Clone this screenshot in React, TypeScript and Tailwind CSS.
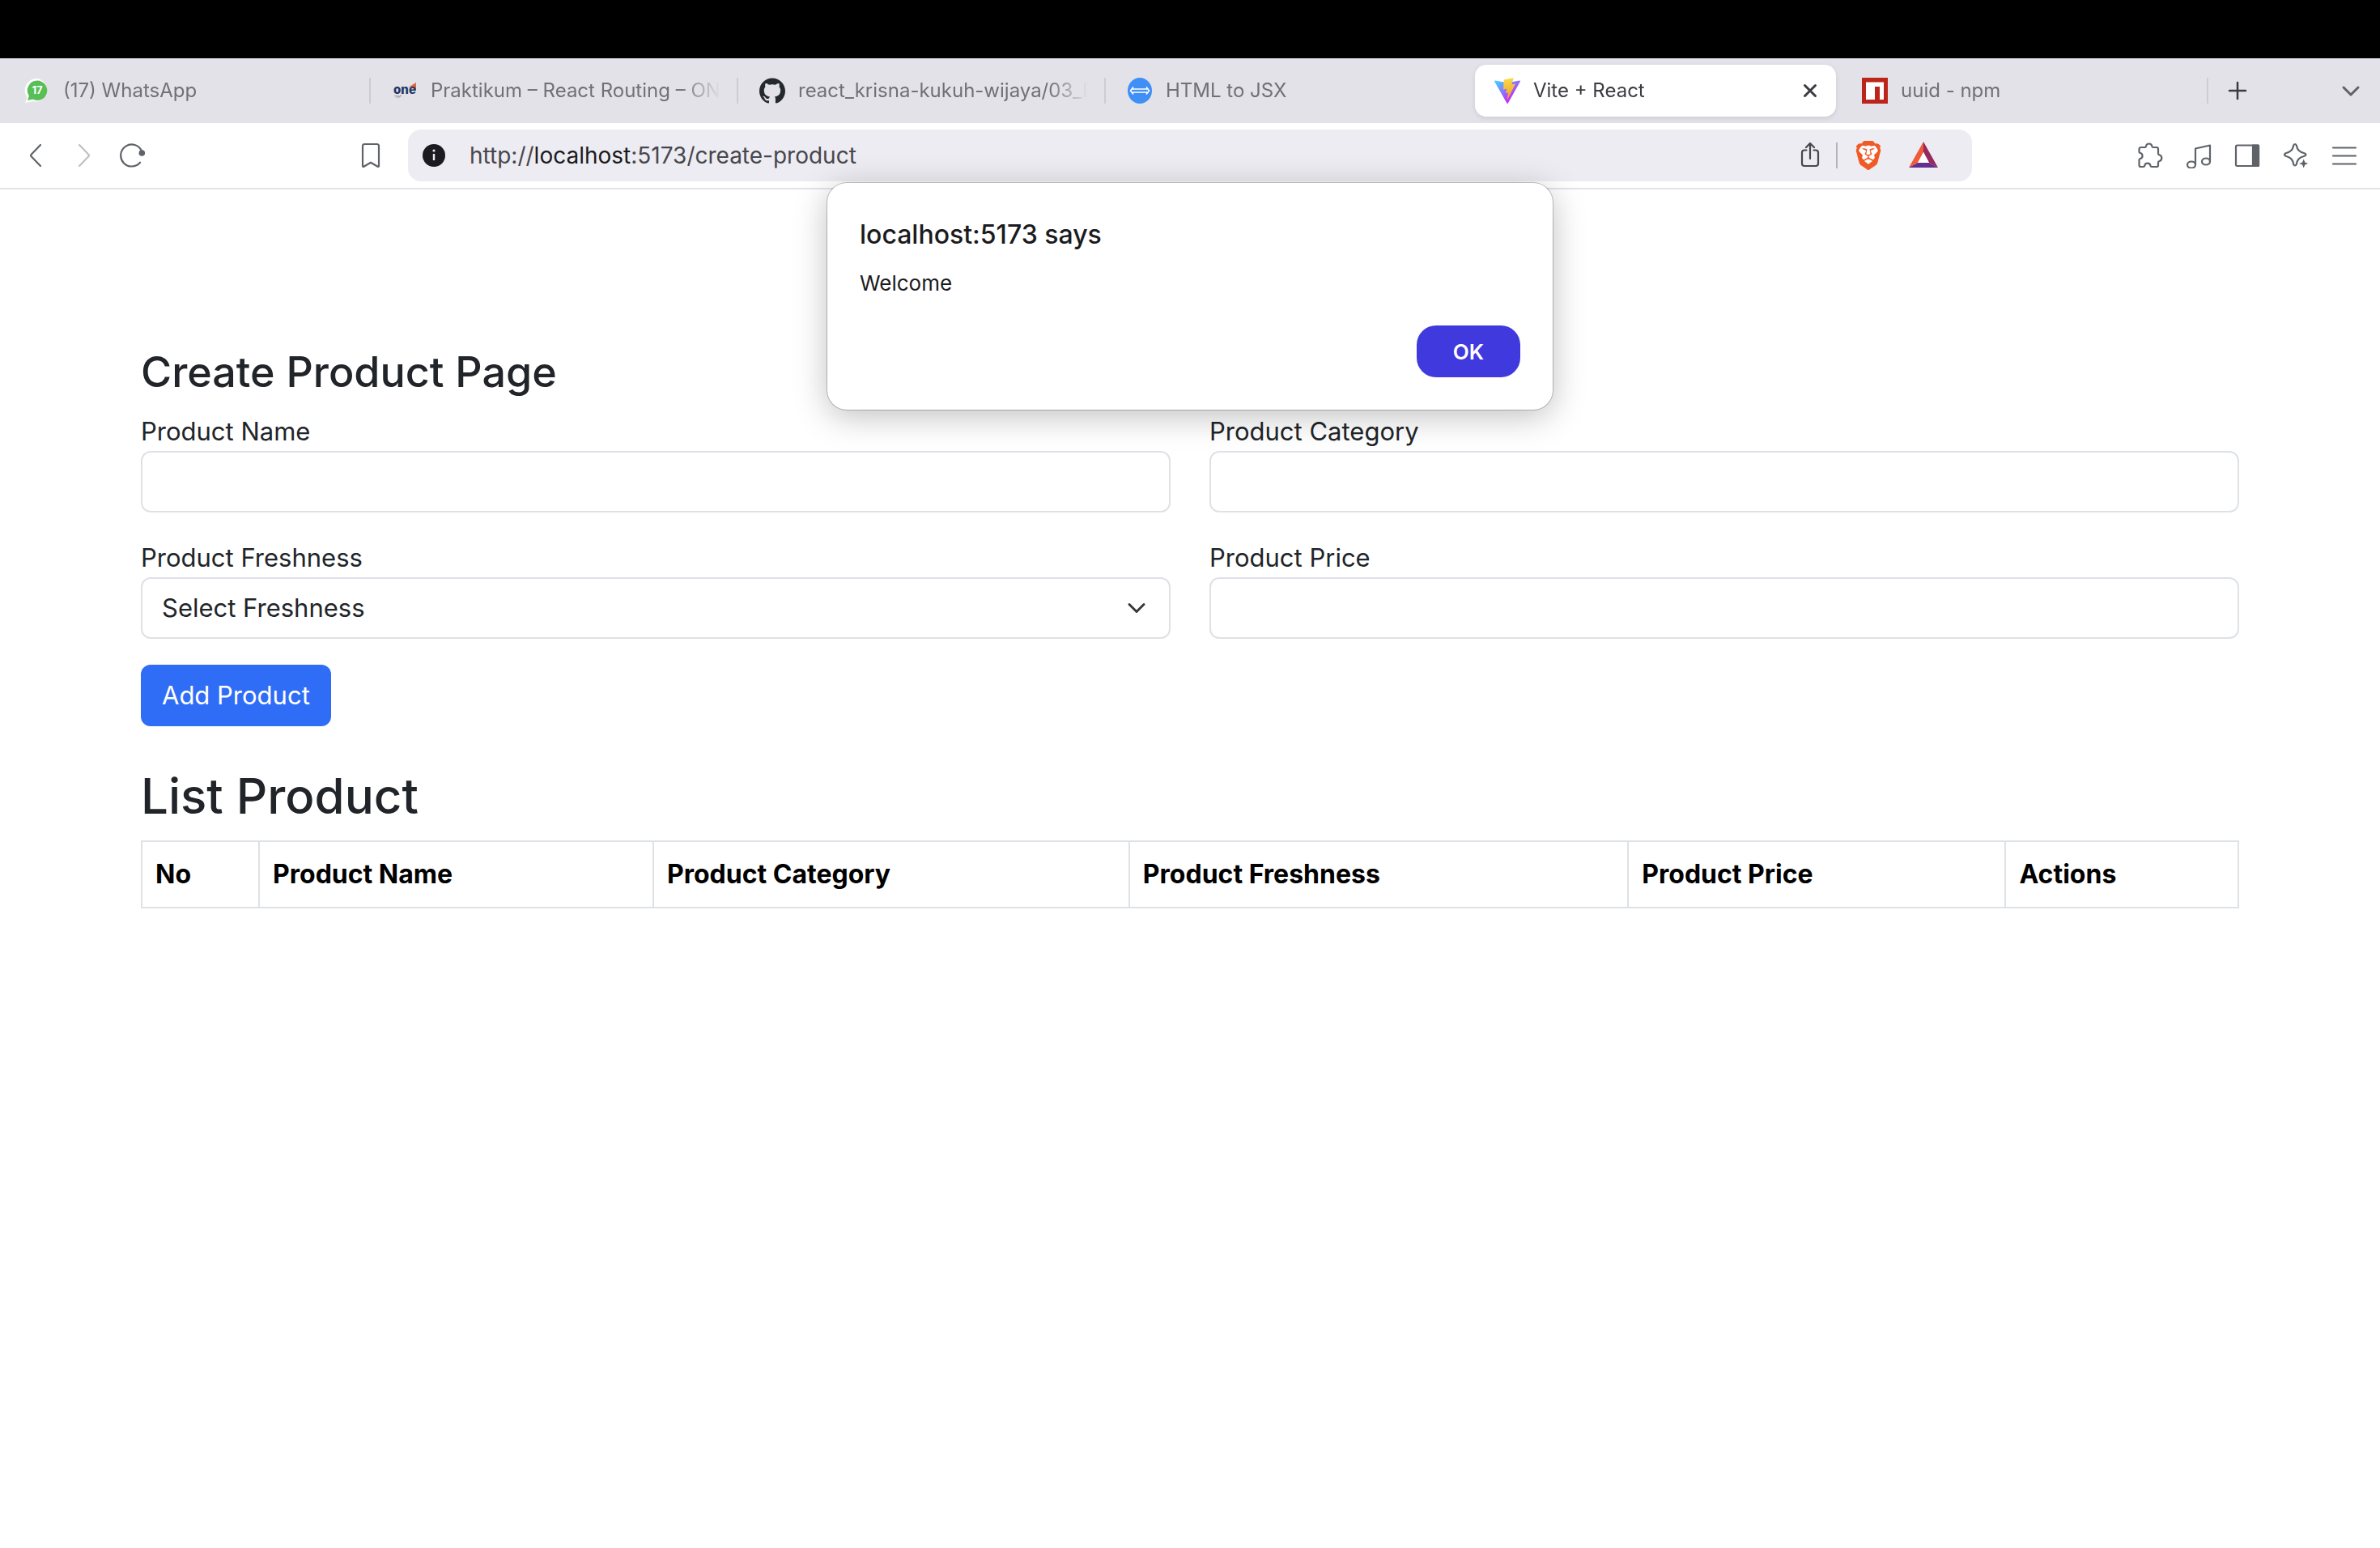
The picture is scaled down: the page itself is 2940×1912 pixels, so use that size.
import type { ReactNode } from "react";
import { SiBrave, SiGithub } from "react-icons/si";

function WhatsAppIcon() {
  return (
    <svg viewBox="0 0 32 32" className="size-8">
      <path d="M16.5 1A14.3 14.3 0 1 1 10.6 29.2L1 31L3.6 24.2A14.6 14.6 0 0 1 16.5 1Z" fill="#fff" />
      <path d="M16.3 3.6A12.2 12.2 0 1 1 10.4 26.6L4 28L5.8 22.4A12.2 12.2 0 0 1 16.3 3.6Z" fill="#57bf56" />
      <text x="16" y="20" textAnchor="middle" fontSize="13" fontWeight="700" fill="#fff" fontFamily="Inter, sans-serif">
        17
      </text>
    </svg>
  );
}

function OneIcon() {
  return (
    <svg viewBox="0 0 32 32" className="size-8">
      <path d="M20 12L30 6V16L26 11Z" fill="#e2663f" />
      <text x="16" y="20" textAnchor="middle" fontSize="15" fontWeight="800" fill="#1f3766" fontFamily="Inter, sans-serif">
        one
      </text>
      <path d="M3 22.5H9M5 24H9.5" stroke="#9aa3b8" strokeWidth="1" />
      <path d="M9 24L11.5 21.5" stroke="#e58a63" strokeWidth="1.5" />
    </svg>
  );
}

function HtmlToJsxIcon() {
  return (
    <svg viewBox="0 0 32 32" className="size-8">
      <ellipse cx="16" cy="16" rx="15" ry="16" fill="#3f8ff7" />
      <path
        d="M6.500 14H25.500M6.500 18H25.500M8 11.500L4.500 16L8 20.500M24 11.500L27.500 16L24 20.500"
        fill="none"
        stroke="#fff"
        strokeWidth="1.6"
      />
    </svg>
  );
}

function ViteIcon() {
  return (
    <svg viewBox="0 0 256 257" className="size-8">
      <defs>
        <linearGradient id="vite-shell" x1="-.828%" x2="57.636%" y1="7.652%" y2="78.411%">
          <stop offset="0%" stopColor="#41D1FF" />
          <stop offset="100%" stopColor="#BD34FE" />
        </linearGradient>
        <linearGradient id="vite-bolt" x1="43.376%" x2="50.316%" y1="2.242%" y2="89.030%">
          <stop offset="0%" stopColor="#FFEA83" />
          <stop offset="8.333%" stopColor="#F9D44A" />
          <stop offset="100%" stopColor="#F5A623" />
        </linearGradient>
      </defs>
      <path
        fill="url(#vite-shell)"
        d="M255.153 37.938L134.897 252.976c-2.483 4.440-8.862 4.466-11.382.048L.875 37.958c-2.746-4.814 1.371-10.646 6.827-9.670l120.385 21.517a6.537 6.537 0 0 0 2.322-.004l117.867-21.483c5.438-.991 9.574 4.796 6.877 9.620Z"
      />
      <path
        fill="url(#vite-bolt)"
        d="M185.432.063L96.440 17.501a3.268 3.268 0 0 0-2.634 3.014l-5.474 92.456a3.268 3.268 0 0 0 3.997 3.378l24.777-5.718c2.318-.535 4.413 1.507 3.936 3.838l-7.361 36.047c-.495 2.426 1.782 4.500 4.151 3.780l15.304-4.649c2.372-.720 4.652 1.360 4.150 3.788l-11.698 56.621c-.732 3.542 3.979 5.473 5.943 2.437l1.313-2.028l72.516-144.720c1.215-2.423-.880-5.186-3.540-4.672l-25.505 4.922c-2.396.462-4.435-1.770-3.759-4.114l16.646-57.705c.677-2.350-1.370-4.583-3.769-4.113Z"
      />
    </svg>
  );
}

function NpmIcon() {
  return (
    <svg viewBox="0 0 32 32" className="size-8">
      <path d="M0 0H32V32H0Z" fill="#bc261a" />
      <path d="M5 5.5H27V27H22V11H16V27H5Z" fill="#fff" />
    </svg>
  );
}

function Glyph({ children, className }: { children: ReactNode; className: string }) {
  return (
    <svg
      viewBox="0 0 32 32"
      className={className}
      fill="none"
      stroke="currentColor"
      strokeWidth="2.2"
      strokeLinecap="round"
      strokeLinejoin="round"
    >
      {children}
    </svg>
  );
}

function BatIcon() {
  return (
    <svg viewBox="-2 -2 36 36" className="size-9">
      <path d="M16 -1L-2 31L9 25L16 12Z" fill="#f05a36" />
      <path d="M16 -1L34 31L23 25L16 12Z" fill="#962a5e" />
      <path d="M-2 31H34L23 25H9Z" fill="#632f8e" />
      <path d="M16 12L23 25H9Z" fill="#fff" />
    </svg>
  );
}

type TabProps = { icon: ReactNode; title: string; active?: boolean; divider?: boolean };

function Tab({ icon, title, active = false, divider = true }: TabProps) {
  return (
    <div className="flex h-full max-w-[454px] min-w-0 flex-1 items-center">
      <div
        className={
          active
            ? "mr-1.5 ml-0.5 flex h-16 min-w-0 flex-1 items-center rounded-[14px] bg-white pr-4 pl-6 text-[#3b3b41] shadow-[0_2px_6px_rgba(0,0,0,0.1)]"
            : "mr-5 flex h-16 min-w-0 flex-1 items-center pl-[26px] text-[#717175]"
        }
      >
        <button type="button" className="flex min-w-0 flex-1 items-center gap-4 text-left">
          <span className="shrink-0">{icon}</span>
          <span className="flex-1 overflow-hidden whitespace-nowrap [mask-image:linear-gradient(to_right,black_calc(100%-48px),transparent)]">
            {title}
          </span>
        </button>
        {active && (
          <button type="button" aria-label="Close tab">
            <Glyph className="size-8">
              <path d="M9.500 9.500L22.500 22.500M22.500 9.500L9.500 22.500" strokeWidth="3" />
            </Glyph>
          </button>
        )}
      </div>
      {divider && <span className="h-8 w-0.5 shrink-0 bg-[#cdcdd1]" />}
    </div>
  );
}

function TabStrip() {
  return (
    <div className="flex h-20 items-center bg-[#e3e2e8] pl-1 text-2xl">
      <Tab icon={<WhatsAppIcon />} title="(17) WhatsApp" />
      <Tab icon={<OneIcon />} title="Praktikum – React Routing – ONE" />
      <Tab icon={<SiGithub className="size-8 text-[#24292e]" />} title="react_krisna-kukuh-wijaya/03_R" />
      <Tab icon={<HtmlToJsxIcon />} title="HTML to JSX" divider={false} />
      <Tab icon={<ViteIcon />} title="Vite + React" active divider={false} />
      <Tab icon={<NpmIcon />} title="uuid - npm" />
      <button type="button" aria-label="New tab" className="ml-5 text-[#3b3b41]">
        <Glyph className="size-8">
          <path d="M16 6V26M6 16H26" strokeWidth="2.5" />
        </Glyph>
      </button>
      <button type="button" aria-label="Search tabs" className="mr-5 ml-auto text-[#5f6368]">
        <Glyph className="size-8">
          <path d="M7 12L16 21L25 12" strokeWidth="3" />
        </Glyph>
      </button>
    </div>
  );
}

function AddressBar() {
  return (
    <div className="flex h-16 flex-1 items-center rounded-2xl bg-[#edecf2] pr-[42px] pl-4">
      <button type="button" aria-label="Site information">
        <svg viewBox="0 0 32 32" className="size-8">
          <circle cx="16" cy="16" r="14" fill="#1b1b20" />
          <circle cx="16" cy="10" r="1.6" fill="#edecf2" />
          <path d="M16 14V22" stroke="#edecf2" strokeWidth="2.4" />
        </svg>
      </button>
      <a href="http://localhost:5173/create-product" className="ml-7 flex-1 text-[28px] text-[#47474c]">
        http://<span className="text-[#1b1b20]">localhost</span>:5173/create-product
      </a>
      <button type="button" aria-label="Share" className="text-[#47474c]">
        <Glyph className="size-8">
          <path d="M16 20V1M11 6L16 1L21 6M11.500 9.500H9Q6 9.500 6 12.500V26Q6 29 9 29H23Q26 29 26 26V12.500Q26 9.500 23 9.500H20.500" />
        </Glyph>
      </button>
      <span className="mx-4 h-8 w-0.5 bg-[#b4b4b9]" />
      <button type="button" aria-label="Shields" className="relative mx-1 text-[#f15a24]">
        <svg viewBox="0 0 36 36" className="absolute inset-0 size-9">
          <path d="M8 7H28L30 14L26 27L18 32L10 27L6 14Z" fill="#fff" />
        </svg>
        <SiBrave className="relative size-9" />
      </button>
      <button type="button" aria-label="Rewards" className="ml-7">
        <BatIcon />
      </button>
    </div>
  );
}

function Toolbar() {
  return (
    <div className="flex h-[82px] items-center border-b-2 border-[#e3e2e8] bg-white text-[#5f6368]">
      <div className="flex w-[504px] items-center gap-7 pr-[30px] pl-7">
        <button type="button" aria-label="Back">
          <Glyph className="size-8">
            <path d="M22 3L10.700 14.700Q9.500 16 10.700 17.300L22 29" />
          </Glyph>
        </button>
        <button type="button" aria-label="Forward" className="text-[#c0c0c2]">
          <Glyph className="size-8">
            <path d="M10 3L21.300 14.700Q22.500 16 21.300 17.300L10 29" />
          </Glyph>
        </button>
        <button type="button" aria-label="Reload">
          <Glyph className="size-8">
            <path d="M25 24.700A13.500 13.500 0 1 1 27 10.500" />
            <circle cx="27.3" cy="13" r="3.8" fill="currentColor" stroke="none" />
          </Glyph>
        </button>
        <button type="button" aria-label="Bookmark" className="ml-auto">
          <Glyph className="size-8">
            <path d="M6 4.500Q6 2 8.500 2H23.500Q26 2 26 4.500V29.500L25 30L16 24.700L7 30L6 29.500Z" />
          </Glyph>
        </button>
      </div>
      <AddressBar />
      <div className="flex w-[504px] items-center justify-end gap-7 pr-7">
        <button type="button" aria-label="Extensions">
          <Glyph className="size-8">
            <path d="M2.500 8.500Q2.500 6 5 6H9.500Q10.800 6 11 4.600A3.700 3.700 0 0 1 18.300 4.600Q18.500 6 20 6H24Q26 6 26 8V13.500Q26 15 27.400 15.300A4 4 0 0 1 27.400 23Q26 23.300 26 24.700V28Q26 30 24 30H18Q16.800 30 16.500 28.800A3.700 3.700 0 0 0 9.200 28.800Q9 30 7.800 30H4.500Q2.500 30 2.500 28V21.500Q2.500 20.300 3.800 20A3.600 3.600 0 0 0 3.800 13Q2.500 12.800 2.500 11.600Z" />
          </Glyph>
        </button>
        <button type="button" aria-label="Playlist">
          <Glyph className="size-8">
            <path d="M12 27V7.500L30 3.500V23.500" />
            <ellipse cx="7" cy="27.5" rx="5" ry="4" />
            <ellipse cx="25" cy="23.5" rx="5" ry="4" />
          </Glyph>
        </button>
        <button type="button" aria-label="Sidebar">
          <Glyph className="size-8">
            <rect x="2" y="3.5" width="28" height="25.5" rx="1.5" />
            <path d="M23 3.500H30V29H23Z" fill="currentColor" />
          </Glyph>
        </button>
        <button type="button" aria-label="Assistant">
          <Glyph className="size-8">
            <path d="M13.200 3.500Q15 0.500 16.800 3.500C17.800 8.500 19.500 11.500 26.500 13.200Q30.500 15 26.500 16.800C19.500 18.500 17.800 21.500 16.800 27Q15 30 13.200 27C12.200 21.500 10.500 18.500 3.500 16.800Q0.500 15 3.500 13.200C10.500 11.500 12.200 8.500 13.200 3.500Z" />
            <path
              d="M25.700 20.500L27.300 24.400L31.200 26L27.300 27.600L25.700 31.500L24.100 27.600L20.200 26L24.100 24.400Z"
              fill="currentColor"
              stroke="none"
            />
          </Glyph>
        </button>
        <button type="button" aria-label="Menu">
          <Glyph className="size-8">
            <path d="M2 6.500H30M2 16.500H30M2 26.500H30" />
          </Glyph>
        </button>
      </div>
    </div>
  );
}

function AlertDialog() {
  return (
    <div
      role="alertdialog"
      aria-labelledby="alert-title"
      aria-describedby="alert-text"
      className="absolute top-[226px] left-1/2 flex w-[896px] -translate-x-1/2 flex-col rounded-3xl bg-white p-10 text-[#1b1b20] shadow-[0_0_0_1px_rgba(0,0,0,0.22),0_8px_40px_rgba(0,0,0,0.25)]"
    >
      <h2 id="alert-title" className="text-[32px] leading-12 font-medium">
        localhost:5173 says
      </h2>
      <p id="alert-text" className="mt-4 text-[26px] leading-10">
        Welcome
      </p>
      <button
        type="button"
        className="mt-8 h-16 w-32 self-end rounded-3xl bg-[#3f39de] text-[26px] font-semibold text-white"
      >
        OK
      </button>
    </div>
  );
}

function TextField({ id, label }: { id: string; label: string }) {
  return (
    <div className="flex flex-col">
      <label htmlFor={id} className="leading-12">
        {label}
      </label>
      <input id={id} type="text" className="h-[76px] rounded-xl border-2 border-[#dee2e6] bg-white px-6" />
    </div>
  );
}

function ProductForm() {
  return (
    <form>
      <div className="grid grid-cols-2 gap-x-12 gap-y-8">
        <TextField id="product-name" label="Product Name" />
        <TextField id="product-category" label="Product Category" />
        <div className="flex flex-col">
          <label htmlFor="product-freshness" className="leading-12">
            Product Freshness
          </label>
          <div className="relative">
            <select
              id="product-freshness"
              className="h-[76px] w-full appearance-none rounded-xl border-2 border-[#dee2e6] bg-white px-6"
            >
              <option>Select Freshness</option>
            </select>
            <svg
              viewBox="0 0 16 16"
              className="pointer-events-none absolute top-1/2 right-[30px] size-6 -translate-y-1/2"
              fill="none"
              stroke="#343a40"
              strokeWidth="2"
              strokeLinecap="round"
              strokeLinejoin="round"
            >
              <path d="m2 5 6 6 6-6" />
            </svg>
          </div>
        </div>
        <TextField id="product-price" label="Product Price" />
      </div>
      <button type="submit" className="mt-8 h-[76px] rounded-xl bg-[#306df6] px-[26px] text-white">
        Add Product
      </button>
    </form>
  );
}

const columns = [
  { name: "No", width: "w-[5.6%]" },
  { name: "Product Name", width: "w-[18.8%]" },
  { name: "Product Category", width: "w-[22.7%]" },
  { name: "Product Freshness", width: "w-[23.8%]" },
  { name: "Product Price", width: "w-[18%]" },
  { name: "Actions", width: "w-[11.1%]" },
];

function ProductTable() {
  return (
    <table className="w-full table-fixed border-collapse text-left text-[32px] text-black">
      <thead>
        <tr>
          {columns.map((column) => (
            <th
              key={column.name}
              scope="col"
              className={`${column.width} border-2 border-[#dee2e6] px-4 py-4 leading-12 font-bold`}
            >
              {column.name}
            </th>
          ))}
        </tr>
      </thead>
    </table>
  );
}

export default function App() {
  return (
    <div className="relative min-h-screen bg-white font-['Inter',sans-serif]">
      <div className="h-[72px] bg-black" />
      <header>
        <TabStrip />
        <Toolbar />
      </header>
      <main className="mx-auto max-w-[2640px] px-6 pt-48 text-[31px] text-[#212529]">
        <h1 className="mb-4 text-[52px] leading-[67px] font-medium">Create Product Page</h1>
        <ProductForm />
        <h2 className="mt-12 mb-4 text-[60px] leading-[77px] font-medium">List Product</h2>
        <ProductTable />
      </main>
      <AlertDialog />
    </div>
  );
}
